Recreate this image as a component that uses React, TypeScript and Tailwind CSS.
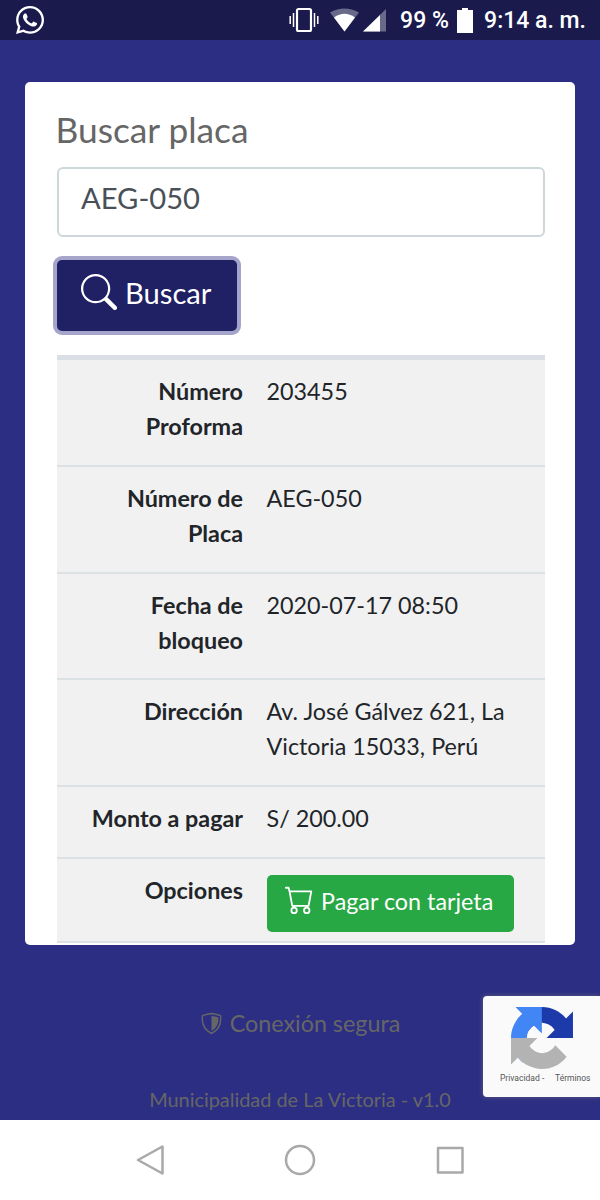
import type { ReactNode } from "react";
import { BsCart, BsSearch } from "react-icons/bs";
import { FaWhatsapp } from "react-icons/fa";

const ROWS = [
  { label: "Número Proforma", value: "203455", height: "h-[105px]" },
  { label: "Número de Placa", value: "AEG-050", height: "h-[106.5px] border-t-2" },
  { label: "Fecha de bloqueo", value: "2020-07-17 08:50", height: "h-[106.5px] border-t-2" },
  {
    label: "Dirección",
    value: "Av. José Gálvez 621, La Victoria 15033, Perú",
    height: "h-[107px] border-t-2",
  },
  { label: "Monto a pagar", value: "S/ 200.00", height: "h-[71.5px] border-t-2" },
];

function StatusBar() {
  return (
    <header className="flex h-10 items-center justify-between bg-[#1a1a4c] pr-3.5 pl-3.5 text-white">
      <FaWhatsapp className="size-8" />
      <div className="flex items-center font-['Roboto',sans-serif] text-[23px] font-medium">
        <svg className="mr-[11px] h-[26px] w-[30px]" viewBox="0 0 30 26" fill="none" stroke="currentColor">
          <rect x="8" y="2" width="14" height="22" rx="1.5" strokeWidth="2.2" />
          <path d="M4.5 6v14M25.5 6v14M1.2 9v8M28.8 9v8" strokeWidth="1.5" />
        </svg>
        <svg className="mr-1 h-[24px] w-[29px]" viewBox="0 0 29 24" fill="currentColor">
          <path d="M0 4.500Q14.500-3.500 29 4.500L14.500 23.500Z" opacity=".35" />
          <path d="M4 9.500Q14.500 2 25 9.500L14.500 23.500Z" />
        </svg>
        <svg className="mr-[14px] h-[24px] w-[23px]" viewBox="0 0 23 24" fill="currentColor">
          <path d="M23 1V23.500H0Z" opacity=".35" />
          <path d="M17 6.900V23.500H0Z" />
        </svg>
        <span className="relative top-px w-[57px] whitespace-nowrap">99 %</span>
        <svg className="mr-[11px] h-[25px] w-[16px]" viewBox="0 0 16 25" fill="currentColor">
          <path d="M5 0h6v2h5v23H0V2h5Z" />
        </svg>
        <span className="relative top-px whitespace-nowrap">9:14 a. m.</span>
      </div>
    </header>
  );
}

function Row({ label, height, children }: { label: string; height: string; children: ReactNode }) {
  return (
    <div className={`flex border-[#dce1e4] pt-[14px] text-[23.33px] leading-[35px] ${height}`}>
      <div className="w-[198px] shrink-0 pr-[11.5px] pl-[12px] text-right font-bold">{label}</div>
      <div className="flex-1 pr-[12px] pl-[12px]">{children}</div>
    </div>
  );
}

function ShieldIcon() {
  return (
    <svg className="mr-[7px] size-[23px]" viewBox="0 0 23 23">
      <path
        d="M11.500 1.500C8.500 1.700 5 2.700 2.500 3.700C1.500 11.500 4.500 18 11.500 21.500C18.500 18 21.500 11.500 20.500 3.700C18 2.700 14.500 1.700 11.500 1.500Z"
        fill="none"
        stroke="currentColor"
        strokeWidth="1.4"
      />
      <path d="M11.500 4C14 4.100 16.500 4.800 18.400 5.500C18.800 11.500 16.500 16 11.500 19Z" fill="currentColor" />
    </svg>
  );
}

function CaptchaBadge() {
  return (
    <aside className="absolute top-[996px] right-0 h-[101px] w-[117px] rounded-l-[4px] bg-[#fafafa] shadow-[0_0_5px_#606080]">
      <svg className="mt-[11px] ml-[28px] size-[62px]" viewBox="0 0 64 64">
        <path
          fill="#1c3aa9"
          d="M64 31.955l-.033-1.37V4.687l-7.16 7.16C50.948 4.674 42.033.093 32.05.093c-10.4 0-19.622 4.96-25.458 12.64l11.736 11.86a15.55 15.55 0 0 1 4.754-5.334c2.05-1.6 4.952-2.906 8.968-2.906.485 0 .86.057 1.135.163 4.976.393 9.288 3.14 11.828 7.124l-8.307 8.307L64 31.953"
        />
        <path
          fill="#4285f4"
          d="M31.862.094l-1.37.033H4.594l7.16 7.16C4.58 13.147 0 22.06 0 32.046c0 10.4 4.96 19.622 12.64 25.458L24.5 45.768a15.55 15.55 0 0 1-5.334-4.754c-1.6-2.05-2.906-4.952-2.906-8.968 0-.485.057-.86.163-1.135.393-4.976 3.14-9.288 7.124-11.828l8.307 8.307L31.86.095"
        />
        <path
          fill="#b3b3b3"
          d="M.001 32.045l.033 1.37v25.898l7.16-7.16c5.86 7.173 14.774 11.754 24.76 11.754 10.4 0 19.622-4.96 25.458-12.64l-11.736-11.86a15.55 15.55 0 0 1-4.754 5.334c-2.05 1.6-4.952 2.906-8.968 2.906-.485 0-.86-.057-1.135-.163-4.976-.393-9.288-3.14-11.828-7.124l8.307-8.307L.001 32.044"
        />
      </svg>
      <div className="flex pl-[17px] font-['Roboto',sans-serif] text-[8.500px] leading-[18px] text-[#555]">
        <span className="w-[42px]">Privacidad</span>
        <span className="w-[13px]">-</span>
        <span>Términos</span>
      </div>
    </aside>
  );
}

export default function App() {
  return (
    <div className="relative flex h-[1200px] w-[600px] flex-col overflow-hidden bg-[#2c2e83] font-['Lato',sans-serif] text-[#212529]">
      <StatusBar />

      <main className="mx-[25px] mt-[42px] h-[862.5px] overflow-hidden rounded-[5px] bg-white pr-8 pl-[31.5px] pt-[27px]">
        <h1 className="-ml-px text-[35.3px] leading-[42px] text-[#666]">Buscar placa</h1>
        <div className="mt-[16px] h-[70px] w-[488.5px] rounded-[6px] border-2 border-[#ced8da] pt-[7px] pl-[22.5px] text-[29.17px] leading-[44px] text-[#495057]">
          AEG-050
        </div>
        <button className="mt-[23px] flex h-[71px] w-[180px] rounded-[5px] bg-[#202164] pl-[24.5px] text-[29.17px] leading-[65px] text-white ring-4 ring-[#a5a5cc]">
          <BsSearch className="mt-[14px] mr-[8px] size-[36px]" />
          Buscar
        </button>

        <section className="mt-[24px] w-[488.5px] border-t-5 border-[#dadfe6] bg-[#f1f1f1]">
          {ROWS.map((r) => (
            <Row key={r.label} label={r.label} height={r.height}>
              {r.value}
            </Row>
          ))}
          <Row label="Opciones" height="h-[86px] border-t-2 border-b-2">
            <button className="mt-[2px] flex h-[57px] w-[247px] rounded-[5px] bg-[#28a745] pl-[18.5px] leading-[53px] whitespace-nowrap text-white">
              <BsCart className="mt-[10px] mr-[7px] size-[29px]" />
              Pagar con tarjeta
            </button>
          </Row>
        </section>
      </main>

      <footer className="flex flex-1 flex-col items-center text-[#666]">
        <p className="mt-[61px] flex items-center text-[23.33px] leading-[35px]">
          <ShieldIcon />
          Conexión segura
        </p>
        <p className="mt-[43px] text-[19.900px] leading-[30px]">Municipalidad de La Victoria - v1.0</p>
      </footer>

      <CaptchaBadge />

      <nav className="flex h-20 items-center bg-white">
        <svg className="mx-auto h-[34px] w-[330px]" viewBox="0 0 330 34" fill="none" stroke="#a9a9a9" strokeWidth="2.500" strokeLinejoin="round">
          <path d="M3 17 27.500 3.500V30.500Z" />
          <circle cx="165" cy="17" r="14" />
          <rect x="303" y="5" width="24.500" height="24.500" />
        </svg>
      </nav>
    </div>
  );
}
